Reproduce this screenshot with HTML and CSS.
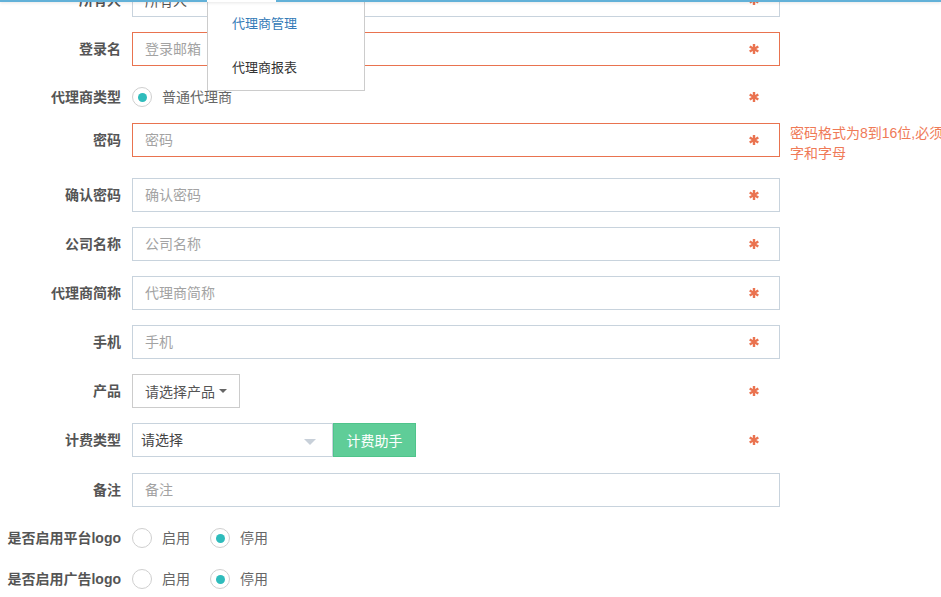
FILE: index.html
```html
<!DOCTYPE html>
<html>
<head>
    <meta charset="utf-8">
    <link rel="stylesheet" href="styles.css">
</head>
<body>
    <div class="topbar">
        <span class="bar-blue bar-left"></span>
        <span class="bar-tab"></span>
        <span class="bar-blue bar-right"></span>
    </div>
    <ul class="nav-menu">
        <li class="active">代理商管理</li>
        <li>代理商报表</li>
    </ul>

    <form class="agent-form">
        <div class="form-group">
            <label class="control-label">所有人</label>
            <div class="col">
                <input type="text" class="form-control" value="所有人">
                <svg class="req" viewBox="0 0 10 10"><g><line x1="5" y1="0" x2="5" y2="10"/><line x1="0.7" y1="2.5" x2="9.3" y2="7.5"/><line x1="0.7" y1="7.5" x2="9.3" y2="2.5"/></g></svg>
            </div>
        </div>
        <div class="form-group">
            <label class="control-label">登录名</label>
            <div class="col">
                <input type="text" class="form-control has-error" placeholder="登录邮箱">
                <svg class="req" viewBox="0 0 10 10"><g><line x1="5" y1="0" x2="5" y2="10"/><line x1="0.7" y1="2.5" x2="9.3" y2="7.5"/><line x1="0.7" y1="7.5" x2="9.3" y2="2.5"/></g></svg>
            </div>
        </div>
        <div class="form-group radio-group first-radio">
            <label class="control-label">代理商类型</label>
            <div class="col">
                <label class="radio-inline"><span class="radio checked"></span>普通代理商</label>
                <svg class="req" viewBox="0 0 10 10"><g><line x1="5" y1="0" x2="5" y2="10"/><line x1="0.7" y1="2.5" x2="9.3" y2="7.5"/><line x1="0.7" y1="7.5" x2="9.3" y2="2.5"/></g></svg>
            </div>
        </div>
        <div class="form-group">
            <label class="control-label">密码</label>
            <div class="col">
                <input type="password" class="form-control has-error" placeholder="密码">
                <svg class="req" viewBox="0 0 10 10"><g><line x1="5" y1="0" x2="5" y2="10"/><line x1="0.7" y1="2.5" x2="9.3" y2="7.5"/><line x1="0.7" y1="7.5" x2="9.3" y2="2.5"/></g></svg>
            </div>
            <div class="error-tip">密码格式为8到16位,必须包含数字和字母</div>
        </div>
        <div class="form-group">
            <label class="control-label">确认密码</label>
            <div class="col">
                <input type="password" class="form-control" placeholder="确认密码">
                <svg class="req" viewBox="0 0 10 10"><g><line x1="5" y1="0" x2="5" y2="10"/><line x1="0.7" y1="2.5" x2="9.3" y2="7.5"/><line x1="0.7" y1="7.5" x2="9.3" y2="2.5"/></g></svg>
            </div>
        </div>
        <div class="form-group">
            <label class="control-label">公司名称</label>
            <div class="col">
                <input type="text" class="form-control" placeholder="公司名称">
                <svg class="req" viewBox="0 0 10 10"><g><line x1="5" y1="0" x2="5" y2="10"/><line x1="0.7" y1="2.5" x2="9.3" y2="7.5"/><line x1="0.7" y1="7.5" x2="9.3" y2="2.5"/></g></svg>
            </div>
        </div>
        <div class="form-group">
            <label class="control-label">代理商简称</label>
            <div class="col">
                <input type="text" class="form-control" placeholder="代理商简称">
                <svg class="req" viewBox="0 0 10 10"><g><line x1="5" y1="0" x2="5" y2="10"/><line x1="0.7" y1="2.5" x2="9.3" y2="7.5"/><line x1="0.7" y1="7.5" x2="9.3" y2="2.5"/></g></svg>
            </div>
        </div>
        <div class="form-group">
            <label class="control-label">手机</label>
            <div class="col">
                <input type="text" class="form-control" placeholder="手机">
                <svg class="req" viewBox="0 0 10 10"><g><line x1="5" y1="0" x2="5" y2="10"/><line x1="0.7" y1="2.5" x2="9.3" y2="7.5"/><line x1="0.7" y1="7.5" x2="9.3" y2="2.5"/></g></svg>
            </div>
        </div>
        <div class="form-group">
            <label class="control-label">产品</label>
            <div class="col">
                <button type="button" class="btn-select">请选择产品 <span class="caret"></span></button>
                <svg class="req" viewBox="0 0 10 10"><g><line x1="5" y1="0" x2="5" y2="10"/><line x1="0.7" y1="2.5" x2="9.3" y2="7.5"/><line x1="0.7" y1="7.5" x2="9.3" y2="2.5"/></g></svg>
            </div>
        </div>
        <div class="form-group billing">
            <label class="control-label">计费类型</label>
            <div class="col">
                <div class="select-box">请选择<span class="select-arrow"></span></div>
                <button type="button" class="btn-helper">计费助手</button>
                <svg class="req" viewBox="0 0 10 10"><g><line x1="5" y1="0" x2="5" y2="10"/><line x1="0.7" y1="2.5" x2="9.3" y2="7.5"/><line x1="0.7" y1="7.5" x2="9.3" y2="2.5"/></g></svg>
            </div>
        </div>
        <div class="form-group">
            <label class="control-label">备注</label>
            <div class="col">
                <input type="text" class="form-control" placeholder="备注">
            </div>
        </div>
        <div class="form-group radio-group">
            <label class="control-label">是否启用平台logo</label>
            <div class="col">
                <label class="radio-inline"><span class="radio"></span>启用</label>
                <label class="radio-inline"><span class="radio checked"></span>停用</label>
            </div>
        </div>
        <div class="form-group radio-group">
            <label class="control-label">是否启用广告logo</label>
            <div class="col">
                <label class="radio-inline"><span class="radio"></span>启用</label>
                <label class="radio-inline"><span class="radio checked"></span>停用</label>
            </div>
        </div>
    </form>
</body>
</html>
```

FILE: styles.css
```css
body {
    margin: 0;
    padding: 0;
    background-color: #fff;
    font-family: "Liberation Sans", "Noto Sans CJK SC", sans-serif;
    font-size: 14px;
    line-height: 20px;
    color: #555;
    overflow: hidden;
}

/* header strip left at the top of the scrolled page */
.topbar {
    position: fixed;
    top: 0;
    left: 0;
    right: 0;
    height: 2px;
    display: flex;
    z-index: 10;
    box-shadow: 0 1px 3px rgba(0, 0, 0, 0.12);
}

.bar-blue {
    background-color: #62b1d8;
}

.bar-left {
    width: 207px;
}

.bar-tab {
    width: 69px;
    background-color: #fff;
}

.bar-right {
    flex: 1;
}

.nav-menu {
    position: fixed;
    top: 2px;
    left: 207px;
    width: 156px;
    margin: 0;
    padding: 0;
    list-style: none;
    background-color: #fff;
    border: 1px solid #ccc;
    border-top: none;
    z-index: 5;
}

.nav-menu li {
    height: 44px;
    line-height: 44px;
    padding-left: 24px;
    font-size: 13px;
    color: #333;
}

.nav-menu li.active {
    color: #337ab7;
}

.agent-form {
    margin-top: -17px;
}

.form-group {
    display: flex;
    align-items: flex-start;
    margin-bottom: 15px;
}

.control-label {
    width: 121px;
    flex-shrink: 0;
    padding-top: 7px;
    text-align: right;
    font-weight: bold;
    color: #555;
    white-space: nowrap;
}

.col {
    position: relative;
    width: 648px;
    flex-shrink: 0;
    margin-left: 11px;
    display: flex;
}

.form-control {
    width: 100%;
    height: 34px;
    box-sizing: border-box;
    padding: 6px 12px;
    border: 1px solid #c8d3dd;
    border-radius: 0;
    font-family: inherit;
    font-size: 14px;
    color: #555;
    outline: none;
}

.form-control::placeholder {
    color: #a3a3a3;
}

.form-control.has-error {
    border-color: #e9734f;
}

.req {
    position: absolute;
    top: 12px;
    right: 21px;
    width: 10px;
    height: 10px;
}

.req g {
    stroke: #ea7350;
    stroke-width: 2.4;
}

.error-tip {
    width: 200px;
    flex-shrink: 0;
    margin-left: 10px;
    color: #ef7a57;
}

/* radio rows */
.radio-group .control-label {
    padding-top: 6px;
}

.radio-group .col {
    padding-top: 6px;
}

.first-radio {
    margin-bottom: 16px;
}

.radio-group .req {
    top: 11px;
}

.radio-inline {
    display: flex;
    align-items: center;
    margin-right: 20px;
    color: #666;
}

.radio {
    width: 18px;
    height: 18px;
    border: 1px solid #cfcfcf;
    border-radius: 50%;
    margin-right: 10px;
    display: flex;
    align-items: center;
    justify-content: center;
}

.radio.checked::after {
    content: "";
    width: 9px;
    height: 9px;
    border-radius: 50%;
    background-color: #2fbcbc;
}

.btn-select {
    height: 34px;
    padding: 6px 12px;
    background-color: #fff;
    border: 1px solid #ccc;
    font-family: inherit;
    font-size: 14px;
    color: #555;
    display: flex;
    align-items: center;
}

.caret {
    display: inline-block;
    width: 0;
    height: 0;
    margin-left: 4px;
    border-top: 4px solid #666;
    border-left: 4px solid transparent;
    border-right: 4px solid transparent;
}

.billing {
    margin-bottom: 16px;
}

.select-box {
    position: relative;
    width: 201px;
    height: 34px;
    box-sizing: border-box;
    padding: 6px 8px;
    border: 1px solid #c8d3dd;
    color: #444;
}

.select-arrow {
    position: absolute;
    top: 15px;
    right: 16px;
    width: 0;
    height: 0;
    border-top: 6px solid #c8d0d9;
    border-left: 6px solid transparent;
    border-right: 6px solid transparent;
}

.btn-helper {
    width: 83px;
    height: 34px;
    background-color: #5fcd98;
    border: 1px solid #4fc48b;
    color: #fff;
    font-family: inherit;
    font-size: 14px;
    padding: 0;
}
```
